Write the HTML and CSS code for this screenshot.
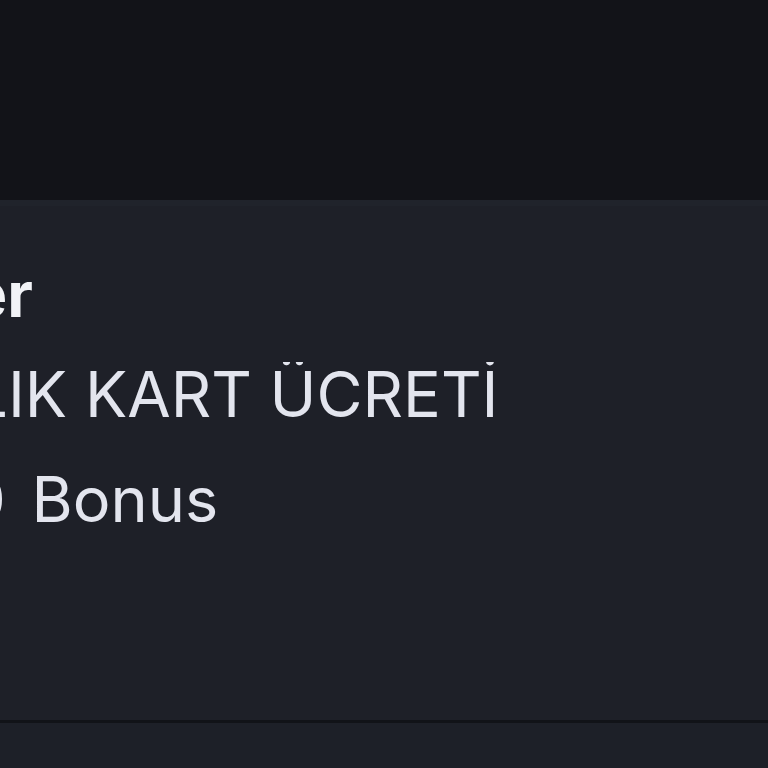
FILE: index.html
```html
<!DOCTYPE html>
<html lang="tr">
<head>
<meta charset="utf-8">
<title>Kart</title>
<link rel="stylesheet" href="styles.css">
</head>
<body>
<div class="top"></div>
<section class="card">
  <div class="rows">
    <div class="row title"><span class="clip c1">Özellikler</span></div>
    <div class="row second"><span class="clip c2">YILLIK KART ÜCRETİ</span></div>
    <div class="row"><span class="clip c3">1000 Bonus</span></div>
  </div>
</section>
<div class="divider"></div>
<div class="bottom"></div>
</body>
</html>
```
FILE: styles.css
```css
html, body {
  margin: 0;
  padding: 0;
  width: 768px;
  height: 768px;
  overflow: hidden;
  background: #1d2028;
  font-family: Inter, "Noto Sans", sans-serif;
}
.top {
  height: 200px;
  background: #121318;
}
.card {
  height: 520px;
  background: #1e2028;
  border-top: 6px solid #20232b;
  box-sizing: border-box;
  overflow: hidden;
}
.rows {
  display: flex;
  flex-direction: column;
  padding-top: 56px;
}
.row {
  height: 100px;
  font-size: 63px;
  line-height: 64px;
  color: #e3e5ee;
  white-space: nowrap;
  overflow: hidden;
}
.row.second {
  height: 105px;
}
.title {
  font-weight: 700;
  color: #f2f3f7;
}
.clip { display: inline-block; }
.c1 { margin-left: -256px; }
.c2 { margin-left: -123px; }
.c3 { margin-left: -139px; word-spacing: 8px; }
.divider {
  height: 3px;
  background: #111318;
}
.bottom {
  height: 45px;
  background: #1d2028;
}
```
